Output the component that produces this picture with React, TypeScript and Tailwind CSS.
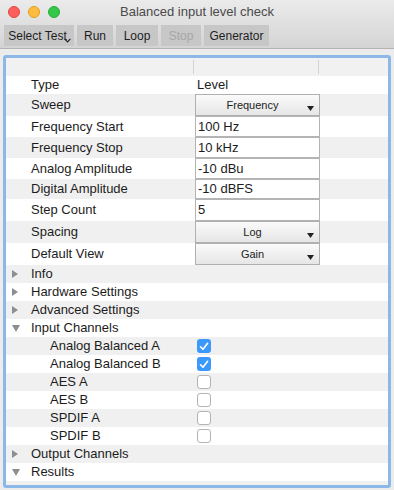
import React from 'react';

type Row =
  | { kind: 'text'; label: string; value: string }
  | { kind: 'select'; label: string; value: string; h: string }
  | { kind: 'input'; label: string; value: string; h: string };

const settings: Row[] = [
  { kind: 'text', label: 'Type', value: 'Level' },
  { kind: 'select', label: 'Sweep', value: 'Frequency', h: 'h-[22px]' },
  { kind: 'input', label: 'Frequency Start', value: '100 Hz', h: 'h-[21px]' },
  { kind: 'input', label: 'Frequency Stop', value: '10 kHz', h: 'h-[21px]' },
  { kind: 'input', label: 'Analog Amplitude', value: '-10 dBu', h: 'h-[21px]' },
  { kind: 'input', label: 'Digital Amplitude', value: '-10 dBFS', h: 'h-[20px]' },
  { kind: 'input', label: 'Step Count', value: '5', h: 'h-[22px]' },
  { kind: 'select', label: 'Spacing', value: 'Log', h: 'h-[22px]' },
  { kind: 'select', label: 'Default View', value: 'Gain', h: 'h-[22px]' },
];

type TreeItem =
  | { kind: 'group'; label: string; open: boolean }
  | { kind: 'check'; label: string; checked: boolean };

const tree: TreeItem[] = [
  { kind: 'group', label: 'Info', open: false },
  { kind: 'group', label: 'Hardware Settings', open: false },
  { kind: 'group', label: 'Advanced Settings', open: false },
  { kind: 'group', label: 'Input Channels', open: true },
  { kind: 'check', label: 'Analog Balanced A', checked: true },
  { kind: 'check', label: 'Analog Balanced B', checked: true },
  { kind: 'check', label: 'AES A', checked: false },
  { kind: 'check', label: 'AES B', checked: false },
  { kind: 'check', label: 'SPDIF A', checked: false },
  { kind: 'check', label: 'SPDIF B', checked: false },
  { kind: 'group', label: 'Output Channels', open: false },
  { kind: 'group', label: 'Results', open: true },
];

const Disclosure: React.FC<{ open: boolean }> = ({ open }) =>
  open ? (
    <svg width="8" height="7" viewBox="0 0 8 7" className="ml-[6px] mr-[11px] shrink-0">
      <path d="M0 0 H8 L4 7 Z" fill="#8e8e8e" />
    </svg>
  ) : (
    <svg width="6" height="8" viewBox="0 0 6 8" className="ml-[6px] mr-[13px] shrink-0">
      <path d="M0 0 V8 L6 4 Z" fill="#8e8e8e" />
    </svg>
  );

const Checkbox: React.FC<{ checked: boolean }> = ({ checked }) =>
  checked ? (
    <div className="w-[14px] h-[14px] rounded-[3px] bg-[#3c99fc] flex items-center justify-center">
      <svg width="10" height="9" viewBox="0 0 10 9">
        <path d="M1.5 4.8 L4 7.3 L8.6 1.3" stroke="white" strokeWidth="1.6" fill="none" strokeLinecap="round" strokeLinejoin="round" />
      </svg>
    </div>
  ) : (
    <div className="w-[14px] h-[14px] rounded-[3px] bg-white border border-[#b4b4b4]" />
  );

const Select: React.FC<{ value: string }> = ({ value }) => (
  <div className="relative w-[125px] h-full border border-[#b0b0b0] bg-gradient-to-b from-[#fafafa] to-[#e6e6e6] flex items-center justify-center">
    <span className="text-[11px] text-[#222] pr-[10px]">{value}</span>
    <svg width="7" height="5" viewBox="0 0 7 5" className="absolute right-[5px] bottom-[4px]">
      <path d="M0 0 H7 L3.5 5 Z" fill="#222" />
    </svg>
  </div>
);

const ToolButton: React.FC<{ w: string; disabled?: boolean; children: React.ReactNode }> = ({ w, disabled, children }) => (
  <div className={`relative ${w} h-[21px] bg-[#c7c7c7] flex items-center justify-center text-[12px] ${disabled ? 'text-[#a6a6a6]' : 'text-[#1e1e1e]'}`}>
    {children}
  </div>
);

export default function App() {
  return (
    <div
      className="w-[394px] h-[490px] bg-[#ececec] flex flex-col overflow-hidden"
      style={{ fontFamily: '"Helvetica Neue", "Liberation Sans", Arial, sans-serif' }}
    >
      {/* title + toolbar */}
      <div className="bg-gradient-to-b from-[#ebebeb] to-[#d4d4d4] border-b border-[#b3b3b3]">
        <div className="relative h-[24px] flex items-center justify-center">
          <div className="absolute left-[8px] top-[6px] flex gap-[8px]">
            <div className="w-[12px] h-[12px] rounded-full bg-[#fc605c] border border-[#e2463f]" />
            <div className="w-[12px] h-[12px] rounded-full bg-[#fdbc40] border border-[#e1a116]" />
            <div className="w-[12px] h-[12px] rounded-full bg-[#34c84a] border border-[#2aab3a]" />
          </div>
          <span className="text-[13px] text-[#4a4a4a]">Balanced input level check</span>
        </div>
        <div className="h-[24px] flex items-start gap-[3px] px-[4px] pt-[1px]">
          <ToolButton w="w-[70px]">
            <span className="-ml-[3px]">Select Test</span>
            <svg width="7" height="5" viewBox="0 0 7 5" className="absolute right-[3px] bottom-[3px]">
              <path d="M0.6 0.8 L3.5 3.8 L6.4 0.8" stroke="#222" strokeWidth="1.2" fill="none" />
            </svg>
          </ToolButton>
          <ToolButton w="w-[36px]">Run</ToolButton>
          <ToolButton w="w-[42px]">Loop</ToolButton>
          <ToolButton w="w-[40px]" disabled>Stop</ToolButton>
          <ToolButton w="w-[65px]">Generator</ToolButton>
        </div>
      </div>

      {/* table panel */}
      <div className="px-[3px] pt-[6px]">
        <div className="h-[433px] border-[3px] border-[#8cb8e8] rounded-[3px] bg-white overflow-hidden text-[13px] text-[#1c1c1c]">
          <div className="h-[18px] bg-[#f1f1f1] flex items-center">
            <div className="w-[188px] h-[14px] border-r border-[#d2d2d2]" />
            <div className="w-[125px] h-[14px] border-r border-[#d2d2d2]" />
          </div>

          {settings.map((r, i) => {
            const bg = i % 2 === 0 ? 'bg-white' : 'bg-[#f0f0f0]';
            if (r.kind === 'text') {
              return (
                <div key={r.label} className={`h-[18px] flex items-center ${bg}`}>
                  <span className="w-[188px] pl-[25px]">{r.label}</span>
                  <span className="pl-[3px]">{r.value}</span>
                </div>
              );
            }
            return (
              <div key={r.label} className={`${r.h} flex items-center ${bg}`}>
                <span className="w-[188px] pl-[25px] shrink-0">{r.label}</span>
                <div className="h-full pl-[1px] flex">
                  {r.kind === 'select' ? (
                    <Select value={r.value} />
                  ) : (
                    <div className="w-[125px] h-full bg-white border border-[#b4b4b4] flex items-center pl-[2px]">
                      {r.value}
                    </div>
                  )}
                </div>
              </div>
            );
          })}

          {tree.map((t, i) => {
            const bg = i % 2 === 0 ? 'bg-[#f0f0f0]' : 'bg-white';
            if (t.kind === 'group') {
              return (
                <div key={t.label} className={`h-[18px] flex items-center ${bg}`}>
                  <Disclosure open={t.open} />
                  <span>{t.label}</span>
                </div>
              );
            }
            return (
              <div key={t.label} className={`h-[18px] flex items-center ${bg}`}>
                <span className="w-[188px] pl-[44px] shrink-0">{t.label}</span>
                <div className="pl-[3px]">
                  <Checkbox checked={t.checked} />
                </div>
              </div>
            );
          })}
          <div className="h-[18px] bg-[#f0f0f0]" />
        </div>
      </div>
    </div>
  );
}
